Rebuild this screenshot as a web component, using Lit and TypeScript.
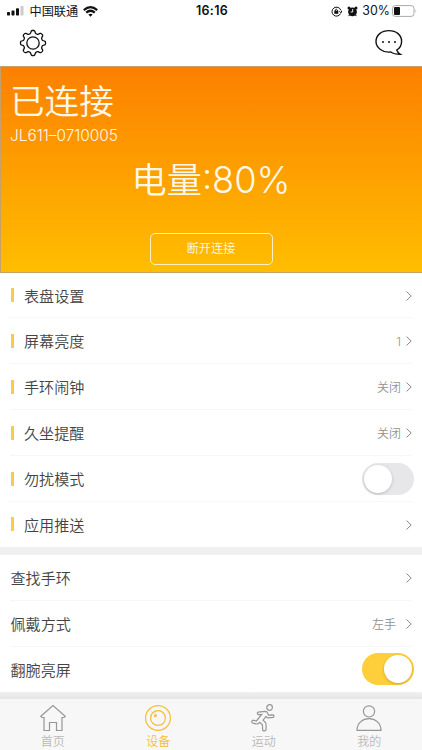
import { LitElement, html, css, svg, nothing } from "lit";
import { customElement, property } from "lit/decorators.js";

const gearPath = (() => {
  const points: string[] = [];
  for (let deg = 0; deg < 360; deg += 3) {
    const a = (deg * Math.PI) / 180;
    const r = 11.1 + 1.5 * Math.tanh(1.9 * Math.cos(8 * a));
    points.push(`${(14 + r * Math.cos(a)).toFixed(2)} ${(14 + r * Math.sin(a)).toFixed(2)}`);
  }
  return `M${points.join("L")}Z`;
})();

const tabIcons: Record<string, unknown> = {
  home: svg`<path d="M1.8 12.3 14 1.6 26.2 12.3 25 13.5H23V26.5H17.5V18.5H10.5V26.5H5V13.5H3Z"/>`,
  device: svg`<circle cx="14" cy="14" r="12.4"/><circle cx="14" cy="14" r="7.4"/><circle cx="11.4" cy="11.6" r="1"/>`,
  sport: svg`<circle cx="19.6" cy="3.5" r="2.8"/><path d="M8 8.2 15 7.4Q17.2 7.4 17.6 9.2L18.5 11.1 22.8 10.9Q24.8 11.6 23.4 13.4L17.4 13.9 16 12.4 13.1 16.2 15.7 18.9Q16.5 22 15.9 26Q14.5 27.7 12.7 26.2L12.4 20.7 9.8 18.3Q7.8 20.8 4.8 19.6L2.1 18.7Q1.1 16.8 3 16.2L6.4 17 11.7 10.5 8.2 10.7Q6.5 9.6 8 8.2Z"/>`,
  me: svg`<circle cx="14" cy="7.4" r="5.6"/><path d="M2 26.4C2.2 10.8 25.8 10.8 26 26.4Z"/>`,
};

@customElement("toggle-switch")
export class ToggleSwitch extends LitElement {
  @property({ type: Boolean, reflect: true }) on = false;
  static styles = css`
    :host { display: flex; box-sizing: border-box; width: 52px; height: 32px; padding: 2px; border-radius: 16px; background: #e7e7e9; }
    :host([on]) { justify-content: flex-end; background: #ffce3b; }
    .knob { width: 28px; height: 28px; border-radius: 50%; background: #fff; box-shadow: 0 1px 3px rgba(0, 0, 0, 0.2); }
  `;
  render() {
    return html`<div class="knob"></div>`;
  }
}

@customElement("setting-row")
export class SettingRow extends LitElement {
  @property() label = "";
  @property() value = "";
  @property() toggle = "";
  @property({ type: Boolean }) marked = false;
  static styles = css`
    :host { display: flex; align-items: center; box-sizing: border-box; height: 46px; margin: 0 10px; border-bottom: 1px solid #f7f7f7; color: #444; font-size: 15.1px; font-weight: 350; }
    .mark { width: 3px; height: 14px; margin: 0 10.5px 0 0.5px; background: #f9cb4b; }
    .plain { width: 0.5px; }
    .label { flex: 1; line-height: 22px; padding-bottom: 1px; }
    .value { color: #929292; font-size: 12px; margin-right: 5px; line-height: 18px; padding-top: 2px; font-family: Inter, "Noto Sans CJK SC", sans-serif; }
    .wide { margin-right: 10px; }
    svg { display: block; width: 6px; height: 10px; margin-top: 1px; fill: none; stroke: #868686; stroke-width: 1; }
    toggle-switch { margin-right: -2px; }
  `;
  render() {
    return html`
      <span class=${this.marked ? "mark" : "plain"}></span>
      <span class="label">${this.label}</span>
      ${this.toggle
        ? html`<toggle-switch ?on=${this.toggle === "on"}></toggle-switch>`
        : html`${this.value ? html`<span class="value ${this.marked ? "" : "wide"}">${this.value}</span>` : nothing}
            <svg viewBox="0 0 6 10"><path d="M.6.6 5.2 5 .6 9.4"/></svg>`}
    `;
  }
}

@customElement("app-root")
export class AppRoot extends LitElement {
  static styles = css`
    :host { display: flex; flex-direction: column; width: 422px; height: 750px; overflow: hidden; background: #fff; font-family: "Noto Sans CJK SC", sans-serif; }
    svg { display: block; fill: none; stroke: currentColor; }
    .status { display: grid; grid-template-columns: 1fr auto 1fr; align-items: center; height: 22px; padding: 0 5px 0 7px; color: #111; font: 12px/20px Inter, "Noto Sans CJK SC", sans-serif; }
    .left, .right { display: flex; align-items: center; }
    .carrier { margin: 0 5px 0 5.5px; padding-top: 1px; font-size: 12.2px; }
    .time { font-size: 12.5px; font-weight: 600; letter-spacing: 0.3px; }
    .right { justify-content: flex-end; }
    .percent { margin: 0 2px 0 4px; font-size: 12.4px; }
    .alarm { margin-left: 5px; }
    .bar { display: flex; justify-content: space-between; height: 44px; box-sizing: border-box; padding: 7px 19px 0; color: #111; }
    .hero { display: flex; flex-direction: column; box-sizing: border-box; height: 207px; padding: 7px 10px 0 9px; border: 1px solid #c5a06b; border-width: 1px 0 1px 1px; background: linear-gradient(#fc8000, #ffbe00); color: #fff8e8; }
    .state { font-size: 34.6px; line-height: 50px; font-weight: 350; }
    .serial { font: 300 15.4px/20px Inter, sans-serif; margin-top: 2px; }
    .battery { display: flex; justify-content: center; font-size: 35.2px; line-height: 50px; font-weight: 350; margin-top: 7px; }
    .amount { font-family: Inter, sans-serif; font-weight: 300; font-size: 36.2px; padding-top: 2px; height: 48px; }
    .disconnect { align-self: center; box-sizing: border-box; width: 123px; height: 32px; margin-top: 29.5px; border: 1.5px solid #fff1c4; border-radius: 5px; background: none; color: inherit; padding: 0; font: 350 12.2px/27px "Noto Sans CJK SC", sans-serif; }
    .gap { height: 8px; background: #f0f0f0; flex: none; }
    .first, .last { height: 45px; }
    .last { border-bottom-color: transparent; }
    .footer { height: 7px; background: linear-gradient(#f0f0f0, #e5e5e5); flex: none; }
    .tabs { display: grid; grid-template-columns: repeat(4, 1fr); flex: 1; background: #f7f7f7; }
    .tab { display: flex; flex-direction: column; align-items: center; padding-top: 5px; color: #b9b9b9; font-size: 12px; line-height: 18px; font-weight: 350; }
    .tab svg { color: #969696; stroke-width: 1.2; }
    .active, .active svg { color: #f6bd35; }
  `;

  private tab(icon: string, label: string, active = false) {
    return html`<div class="tab ${active ? "active" : ""}">
      <svg width="28" height="28" viewBox="0 0 28 28">${tabIcons[icon]}</svg><span>${label}</span>
    </div>`;
  }

  render() {
    return html`
      <div class="status">
        <div class="left">
          <svg width="17" height="10" viewBox="0 0 17 10" stroke="none">
            <g fill="#111" stroke="none"><rect y="6" width="3" height="3.5" rx=".7"/><rect x="4.5" y="4.4" width="3" height="5.1" rx=".7"/><rect x="9" y="2.3" width="3" height="7.2" rx=".7"/></g>
            <rect x="13.5" y="0" width="3" height="9.5" rx=".7" fill="#ccc" stroke="none"/>
          </svg>
          <span class="carrier">中国联通</span>
          <svg width="15" height="11" viewBox="0 0 15 11"><g stroke="#111" stroke-width="2.2"><path d="M.8 4.1Q7.5-1.7 14.2 4.1M3.2 6.6Q7.5 2.9 11.8 6.6"/></g><path d="M5.3 8.5Q7.5 6.8 9.7 8.5L7.5 10.8Z" fill="#111" stroke="none"/></svg>
        </div>
        <span class="time">16:16</span>
        <div class="right">
          <svg width="11" height="11" viewBox="0 0 11 11"><path d="M9.6 7.5A4.5 4.5 0 1 1 9.8 4.3M8.4 5.2 10 6.8 10.8 4.7"/><path d="M4.2 5V4Q5.3 2.3 6.4 4V5"/><path d="M3.3 4.8h4v3h-4Z" fill="#111" stroke="none"/></svg>
          <svg class="alarm" width="11" height="11" viewBox="0 0 11 11"><g fill="#111" stroke="none"><circle cx="5.5" cy="5.8" r="4.4"/><circle cx="2" cy="2.1" r="1.5"/><circle cx="9" cy="2.1" r="1.5"/><path d="M2 8.5 1.2 10.3 3 9.8ZM9 8.5 9.8 10.3 8 9.8Z"/></g><path d="M5.7 3V6H3.6" stroke="#fff" stroke-width=".9"/></svg>
          <span class="percent">30%</span>
          <svg width="25" height="12" viewBox="0 0 25 12"><rect x=".5" y=".6" width="21.5" height="10.8" rx="2.8" stroke="#aaa"/><rect x="2" y="2.1" width="6" height="7.8" rx="1" fill="#111" stroke="none"/><path d="M23.5 4.2Q25 6 23.5 7.8Z" fill="#aaa" stroke="none"/></svg>
        </div>
      </div>
      <div class="bar">
        <svg width="28" height="28" viewBox="0 0 28 28" stroke-width="1.3"><path d=${gearPath}/><circle cx="14" cy="14" r="6.2"/></svg>
        <svg width="28" height="28" viewBox="0 0 28 28" stroke-width="1.4"><path d="M21.7 21Q22.5 23.5 25.3 25.3Q19 25.3 15.8 23C7.8 24 1 18.7 1 12.5C1 6 6.6 1.6 13.9 1.6C21.3 1.6 26.6 6.2 26.6 12.2C26.6 16 24.8 19.2 21.7 21Z"/><g fill="currentColor" stroke="none"><circle cx="8" cy="12.9" r="1"/><circle cx="14" cy="12.9" r="1"/><circle cx="20" cy="12.9" r="1"/></g></svg>
      </div>
      <section class="hero">
        <div class="state">已连接</div>
        <div class="serial">JL611–0710005</div>
        <div class="battery"><span>电量</span><span class="amount">:80%</span></div>
        <button class="disconnect">断开连接</button>
      </section>
      <setting-row class="first" marked label="表盘设置"></setting-row>
      <setting-row marked label="屏幕亮度" value="1"></setting-row>
      <setting-row marked label="手环闹钟" value="关闭"></setting-row>
      <setting-row marked label="久坐提醒" value="关闭"></setting-row>
      <setting-row marked label="勿扰模式" toggle="off"></setting-row>
      <setting-row class="last" marked label="应用推送"></setting-row>
      <div class="gap"></div>
      <setting-row label="查找手环"></setting-row>
      <setting-row label="佩戴方式" value="左手"></setting-row>
      <setting-row class="last" label="翻腕亮屏" toggle="on"></setting-row>
      <div class="footer"></div>
      <nav class="tabs">
        ${this.tab("home", "首页")}${this.tab("device", "设备", true)}${this.tab("sport", "运动")}${this.tab("me", "我的")}
      </nav>
    `;
  }
}
